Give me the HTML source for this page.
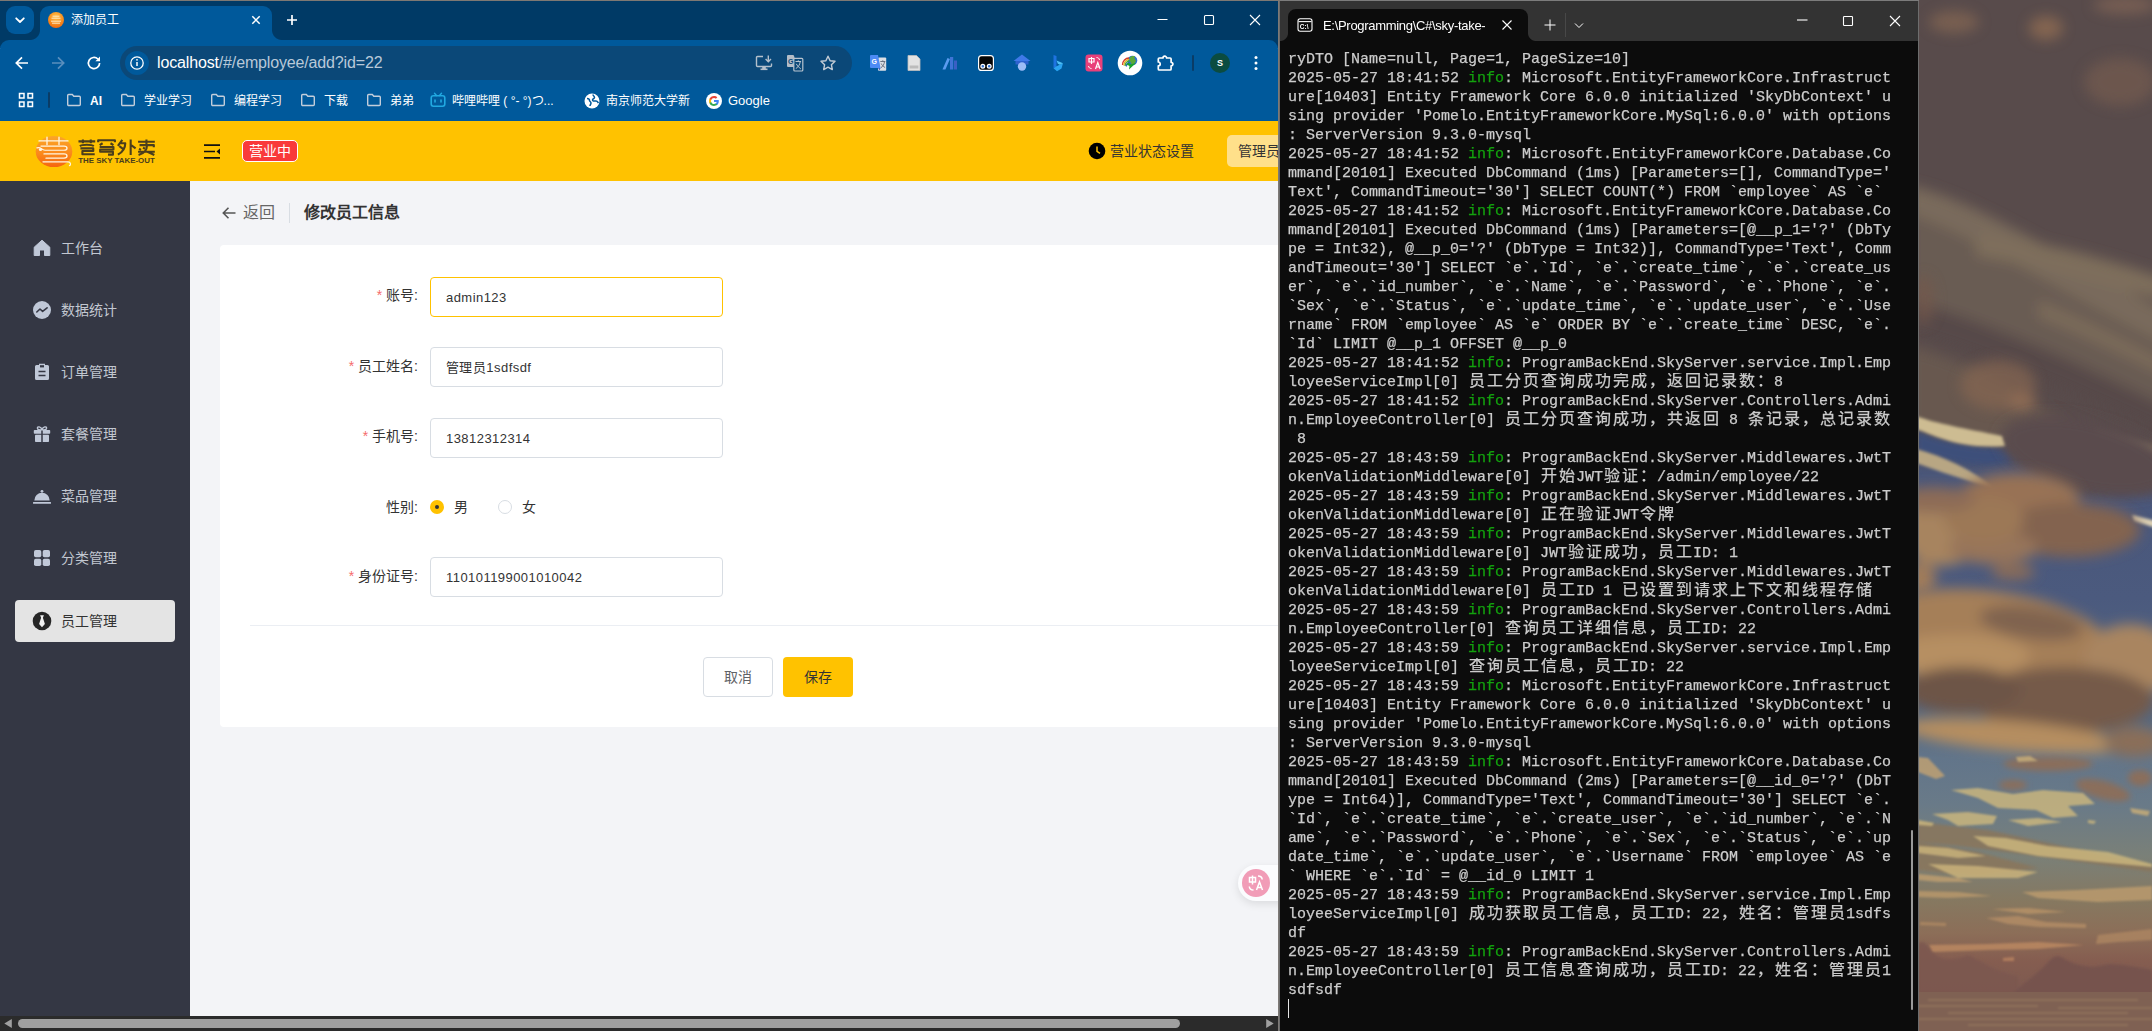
<!DOCTYPE html>
<html lang="zh-CN">
<head>
<meta charset="utf-8">
<title>添加员工</title>
<style>
*{box-sizing:border-box;margin:0;padding:0}
html,body{width:2152px;height:1031px;overflow:hidden;background:#4e4546}
body{position:relative;font-family:"Liberation Sans",sans-serif;font-size:14px;color:#333}
.abs{position:absolute}
svg{display:block}
.nss path{vector-effect:non-scaling-stroke}
/* ---------- wallpaper ---------- */
#wall{position:absolute;left:1918px;top:0;width:234px;height:1031px;overflow:hidden}
/* ---------- browser ---------- */
#br{position:absolute;left:0;top:0;width:1278px;height:1031px;overflow:hidden;background:#f3f4f7}
#brborder{position:absolute;left:1278px;top:0;width:2px;height:1031px;background:linear-gradient(90deg,#7d7976 0,#7d7976 50%,#6c6c6c 50%,#6c6c6c 100%)}
#tabstrip{position:absolute;left:0;top:0;width:1278px;height:48px;background:#003a66}
#topline{position:absolute;left:0;top:0;width:1280px;height:1px;background:#7e7873}
#tabsearch{position:absolute;left:6px;top:6px;width:28px;height:28px;border-radius:9px;background:#00599b}
#tab{position:absolute;left:40px;top:6px;width:232px;height:36px;border-radius:9px 9px 0 0;background:#00599b}
#tab:before,#tab:after{content:"";position:absolute;bottom:2px;width:10px;height:10px}
#tab:before{left:-10px;background:radial-gradient(circle at 0 0,transparent 9.5px,#00599b 10.5px)}
#tab:after{right:-10px;background:radial-gradient(circle at 100% 0,transparent 9.5px,#00599b 10.5px)}
#toolbar{position:absolute;left:0;top:40px;width:1278px;height:81px;background:#00599b;border-radius:9px 9px 0 0}
#url{position:absolute;left:120px;top:6px;width:732px;height:34px;border-radius:17px;background:#0b4878}
#url .ic{position:absolute;left:5px;top:5px;width:24px;height:24px;border-radius:12px;background:#00599b}
#urltext{position:absolute;left:37px;top:7px;font-size:16px;line-height:20px;color:#b9c9d9;white-space:nowrap;letter-spacing:-0.15px}
#urltext b{font-weight:normal;color:#fff}
.bm{position:absolute;top:53px;height:16px;line-height:16px;font-size:13px;color:#fff;white-space:nowrap}
/* ---------- page ---------- */
#page{position:absolute;left:0;top:121px;width:1278px;height:895px;background:#f3f4f7;overflow:hidden}
#hdr{position:absolute;left:0;top:0;width:1278px;height:60px;background:#ffc200}
#side{position:absolute;left:0;top:60px;width:190px;height:835px;background:#343744}
.mi{position:absolute;left:15px;width:160px;height:42px;border-radius:4px;color:#c2c7d1;font-size:14px;line-height:42px;white-space:nowrap}
.mi span{position:absolute;left:46px;top:0}
.mi svg{position:absolute;left:17px;top:11px}
.mi.on{background:#e4e4e4;color:#333}
#card{position:absolute;left:220px;top:124px;width:1100px;height:482px;background:#fff;border-radius:4px}
.lab{position:absolute;right:860px;height:20px;line-height:20px;font-size:14px;color:#333;white-space:nowrap;text-align:right}
.lab i{font-style:normal;color:#f56c6c;margin-right:4px;font-size:14px}
.inp{position:absolute;left:430px;width:293px;height:40px;border:1px solid #d8dde3;border-radius:4px;background:#fff;font-size:13px;line-height:39px;padding-left:15px;color:#333;white-space:nowrap;letter-spacing:.45px}
.btn{position:absolute;top:536px;width:70px;height:40px;border-radius:4px;font-size:14px;line-height:38px;text-align:center;white-space:nowrap}
/* ---------- scrollbar ---------- */
#hs{position:absolute;left:0;top:1016px;width:1278px;height:15px;background:#2b2b2b}
#hs .th{position:absolute;left:18px;top:3px;width:1162px;height:9px;border-radius:4.5px;background:#a0a0a0}
/* ---------- terminal ---------- */
#tm{position:absolute;left:1280px;top:0;width:638px;height:1031px;background:#0c0c0c;overflow:hidden;opacity:.999}
#tmr{position:absolute;left:1918px;top:0;width:1px;height:1031px;background:#6d6d6d}
#tmbar{position:absolute;left:0;top:0;width:638px;height:41px;background:#333}
#tmtop{position:absolute;left:1280px;top:0;width:639px;height:1px;background:#7c7c7c}
#tmtab{position:absolute;left:8px;top:9px;width:240px;height:32px;border-radius:8px 8px 0 0;background:#0c0c0c}
#tmtab:before,#tmtab:after{content:"";position:absolute;bottom:0;width:8px;height:8px}
#tmtab:before{left:-8px;background:radial-gradient(circle at 0 0,transparent 7.5px,#0c0c0c 8.5px)}
#tmtab:after{right:-8px;background:radial-gradient(circle at 100% 0,transparent 7.5px,#0c0c0c 8.5px)}
#tmtitle{position:absolute;left:43px;top:18px;font-size:13px;line-height:16px;color:#fff;white-space:nowrap;letter-spacing:-0.3px}
#tx{position:absolute;left:8px;top:50px;width:620px;font-family:"Liberation Mono",monospace;font-size:15px;color:#ccc;-webkit-text-stroke:.25px #ccc}
#tx div{height:19px;line-height:19px;white-space:pre;overflow:hidden}
#tx u{text-decoration:none;color:#13a10e;-webkit-text-stroke:.25px #13a10e}
#tx s{text-decoration:none;display:inline-block;width:18px;text-align:center;vertical-align:top;font-size:16px;line-height:19px;height:19px;overflow:hidden}
</style>
</head>
<body>
<div id="wall">
<svg width="234" height="1031" viewBox="0 0 234 1031">
 <defs>
  <linearGradient id="sky" x1="0" y1="0" x2="0" y2="1">
   <stop offset="0" stop-color="#574a49"/>
   <stop offset=".18" stop-color="#54494a"/>
   <stop offset=".27" stop-color="#5f524e"/>
   <stop offset=".36" stop-color="#5c4f4d"/>
   <stop offset=".42" stop-color="#5a4d4c"/>
   <stop offset=".46" stop-color="#49567a"/>
   <stop offset=".58" stop-color="#4b5a7e"/>
   <stop offset=".70" stop-color="#566880"/>
   <stop offset=".735" stop-color="#62758a"/>
   <stop offset=".78" stop-color="#697a88"/>
   <stop offset=".83" stop-color="#7a8078"/>
   <stop offset=".875" stop-color="#867860"/>
   <stop offset=".905" stop-color="#8c6e58"/>
   <stop offset=".932" stop-color="#855d50"/>
   <stop offset=".962" stop-color="#7d5a50"/>
   <stop offset=".964" stop-color="#806152"/>
   <stop offset="1" stop-color="#82675a"/>
  </linearGradient>
  <filter id="b7" x="-30%" y="-30%" width="160%" height="160%"><feGaussianBlur stdDeviation="6.5"/></filter>
  <filter id="b3" x="-30%" y="-30%" width="160%" height="160%"><feGaussianBlur stdDeviation="3"/></filter>
  <filter id="b2" x="-30%" y="-30%" width="160%" height="160%"><feGaussianBlur stdDeviation="1.5"/></filter>
  <filter id="b1" x="-30%" y="-30%" width="160%" height="160%"><feGaussianBlur stdDeviation="1.2"/></filter>
 </defs>
 <rect width="234" height="1031" fill="url(#sky)"/>
 <!-- dark upper mass with diagonal lower edge -->
 <g filter="url(#b7)">
  <path d="M-20 -20H260V488L150 494 88 446 -20 418z" fill="#584b4b"/>
 </g>
 <!-- lighter streak zone + streaks -->
 <g filter="url(#b7)">
  <path d="M-10 205C80 225 170 270 250 310V420C150 372 70 322-10 300z" fill="#695b52"/>
  <path d="M-10 345C50 360 120 395 160 440L60 450-10 425z" fill="#67584f"/>
  <path d="M-10 185C60 200 150 262 250 312V346C150 298 60 236-10 214z" fill="#796a5b"/>
  <path d="M58 232C120 241 190 258 250 280V302C190 284 120 266 58 256z" fill="#7e6e5c"/>
  <path d="M120 300C160 315 210 340 250 362V378C210 358 160 334 120 318z" fill="#7a6a5a"/>
  <path d="M-10 300C70 322 160 362 250 408V436C160 394 70 356-10 334z" fill="#56494a"/>
 </g>
 <!-- faint orange patches -->
 <g filter="url(#b7)" opacity=".7">
  <ellipse cx="36" cy="22" rx="25" ry="11" fill="#866752"/>
  <ellipse cx="128" cy="28" rx="17" ry="12" fill="#967053"/>
  <ellipse cx="207" cy="5" rx="32" ry="9" fill="#846656"/>
  <ellipse cx="202" cy="82" rx="36" ry="24" fill="#755b50"/>
  <ellipse cx="6" cy="300" rx="10" ry="25" fill="#74584c"/>
  <ellipse cx="80" cy="385" rx="38" ry="25" fill="#866651"/>
  <ellipse cx="104" cy="402" rx="13" ry="9" fill="#9f7357"/>
 </g>
 <!-- blue wedge, cream streaks -->
 <g filter="url(#b3)">
  <path d="M-2 430C20 440 50 447 88 448L96 462C70 471 30 463-2 452z" fill="#3c4f7a"/>
  <path d="M176 431L238 446V457L180 441z" fill="#8d7b66"/>
 </g>
 <g filter="url(#b7)">
  <ellipse cx="168" cy="456" rx="88" ry="36" fill="#5a4c4d" transform="rotate(14 168 456)"/>
 </g>
 <g filter="url(#b2)">
  <path d="M-2 416C20 424 45 428 84 436L87 446C60 448 40 444 25 439 15 436 5 431-2 429z" fill="#cdbc92"/>
  <path d="M-2 449C25 456 55 470 77 489 50 481 20 471-2 463z" fill="#b8a683"/>
  <path d="M214 515L238 521V528L216 521z" fill="#ddd2b5"/>
 </g>
 <!-- orange clouds band 1 -->
 <g filter="url(#b7)">
  <ellipse cx="100" cy="500" rx="62" ry="27" fill="#987254"/>
  <ellipse cx="152" cy="530" rx="70" ry="27" fill="#83644f"/>
  <ellipse cx="24" cy="530" rx="42" ry="36" fill="#a7845f"/>
  <ellipse cx="75" cy="548" rx="45" ry="16" fill="#97745a"/>
  <ellipse cx="66" cy="520" rx="40" ry="22" fill="#9c7857"/>
  <ellipse cx="16" cy="500" rx="42" ry="13" fill="#8d6c56"/>
  <ellipse cx="2" cy="578" rx="16" ry="16" fill="#a07c5a"/>
  <ellipse cx="95" cy="572" rx="22" ry="8" fill="#8a6c58"/>
 </g>
 <!-- big cloud -->
 <g filter="url(#b7)">
  <ellipse cx="75" cy="635" rx="118" ry="44" fill="#a57f59" transform="rotate(8 75 635)"/>
  <ellipse cx="212" cy="660" rx="46" ry="36" fill="#a98560"/>
  <ellipse cx="40" cy="656" rx="72" ry="22" fill="#b68f62"/>
  <ellipse cx="113" cy="623" rx="52" ry="16" fill="#80644f" transform="rotate(8 113 623)"/>
  <ellipse cx="146" cy="700" rx="90" ry="33" fill="#745a49"/>
  <ellipse cx="44" cy="690" rx="58" ry="23" fill="#6d5547"/>
  <ellipse cx="95" cy="736" rx="112" ry="15" fill="#b58e60" transform="rotate(5 95 736)"/>
  <ellipse cx="216" cy="742" rx="30" ry="15" fill="#8a6e58"/>
 </g>
 <!-- small brown clouds lower sky -->
 <g filter="url(#b3)" fill="#8a6e5c">
  <ellipse cx="130" cy="764" rx="45" ry="7"/>
  <ellipse cx="185" cy="790" rx="28" ry="9" transform="rotate(15 185 790)"/>
  <ellipse cx="222" cy="778" rx="12" ry="8"/>
  <ellipse cx="95" cy="785" rx="14" ry="5"/>
 </g>
 <!-- shaded streak bodies -->
 <g filter="url(#b2)" fill="#8a765c" opacity=".85">
  <path d="M0 822L70 830 130 843 234 866V872L120 856 40 846 0 842z"/>
  <path d="M0 842L60 852 120 868 60 876 0 870z"/>
 </g>
 <!-- lit streaks -->
 <g filter="url(#b1)" fill="#cdb87e" opacity=".82">
  <path d="M0 757L10 758 27 776 18 779 0 772z" fill="#c2a272"/>
  <path d="M33 790L60 788 95 794 125 790 165 793 177 804 150 806 160 816 135 818 118 810 80 808 60 798z"/>
  <path d="M98 757L112 756 120 761 100 762z" fill="#c9ae78"/>
  <path d="M14 814L50 812 79 816 75 824 40 826 30 820z"/>
  <path d="M90 820L120 818 144 822 110 826z"/>
  <path d="M170 820L178 821 176 824 170 823z"/>
  <path d="M212 808L232 811 230 816 214 813z" fill="#c9ae78"/>
  <path d="M0 820L16 823 14 826 0 825z"/>
  <path d="M55 836L88 838 130 846 190 852 234 864V867L180 862 120 856 70 846z"/>
  <path d="M0 846L30 848 68 856 40 858 0 853z" fill="#cbb47c"/>
  <path d="M10 864L60 866 120 872 100 878 40 878z" fill="#cdb57c"/>
  <path d="M0 874L40 878 55 882 20 882 0 880z" fill="#bf9f70"/>
  <path d="M104 892L160 890 234 886V900L180 902 120 898z" fill="#bd9c6e"/>
  <path d="M0 891L40 892 74 896 30 898 0 897z" fill="#ba996c"/>
  <path d="M74 909L110 908 148 912 110 914z" fill="#b89368"/>
  <path d="M68 918L100 916 128 922 168 924 168 928 120 927 90 924z" fill="#b48d66"/>
  <path d="M2 922L28 923 28 926 2 925z" fill="#b08a64"/>
  <path d="M180 935L234 929V940L200 942 178 944z" fill="#ad8662"/>
  <path d="M11 945L70 944 120 942 166 945 120 949 70 950 14 952z" fill="#bd8a62"/>
  <path d="M85 958L96 957 96 961 85 961z" fill="#b98360"/>
 </g>
 <!-- mountains -->
 <g filter="url(#b2)">
  <path d="M0 944C4 940 8 942 14 952 24 962 38 960 50 955 62 960 78 972 100 976L100 994H0z" fill="#7c5850" opacity=".9"/>
  <path d="M96 992C110 980 122 972 132 960 137 955 142 955 148 960 160 966 172 968 182 966 195 962 210 966 234 970V994H96z" fill="#76524d"/>
 </g>
 <rect x="0" y="992" width="234" height="39" fill="#7f6153"/>
 <g filter="url(#b1)" opacity=".5" stroke="#a98a68" stroke-width="1.400" fill="none"><path d="M10 1000h210M0 1006h120M140 1008h94M30 1013h180M0 1019h234M50 1025h160"/></g>
</svg>
</div>

<div id="br">
 <div id="tabstrip"></div>
 <div id="tabsearch"><svg width="28" height="28" viewBox="0 0 28 28"><path d="M10.2 12.3 L14 16 L17.8 12.3" fill="none" stroke="#fff" stroke-width="1.8" stroke-linecap="round" stroke-linejoin="round"/></svg></div>
 <div id="tab">
  <svg class="abs" style="left:8px;top:6px" width="16" height="16" viewBox="0 0 16 16"><defs><radialGradient id="fv" cx="50%" cy="30%" r="70%"><stop offset="0" stop-color="#ffc24a"/><stop offset="0.6" stop-color="#f8901f"/><stop offset="1" stop-color="#ee6a12"/></radialGradient></defs><circle cx="8" cy="8" r="8" fill="url(#fv)"/><path d="M3.5 6.2h9M4.5 4.2h7M3 9.2h10M4 11.2h8" stroke="#fff1d8" stroke-width="1" fill="none" opacity=".9"/></svg>
  <div class="abs" style="left:31px;top:6px;font-size:12px;line-height:16px;color:#fff;white-space:nowrap">添加员工</div>
  <svg class="abs" style="left:208px;top:6px" width="16" height="16" viewBox="0 0 16 16"><path d="M4.3 4.3l7.4 7.4M11.7 4.3l-7.4 7.4" stroke="#fff" stroke-width="1.5" fill="none"/></svg>
 </div>
 <svg class="abs" style="left:282px;top:10px" width="20" height="20" viewBox="0 0 20 20"><path d="M10 5v10M5 10h10" stroke="#fff" stroke-width="1.7" fill="none"/></svg>
 <!-- window controls -->
 <svg class="abs" style="left:1150px;top:8px" width="120" height="24" viewBox="0 0 120 24"><path d="M7.5 11.5h10" stroke="#fff" stroke-width="1" fill="none"/><rect x="54.5" y="7.5" width="9" height="9" rx="1" fill="none" stroke="#fff" stroke-width="1.1"/><path d="M100 7l10 10M110 7l-10 10" stroke="#fff" stroke-width="1.1" fill="none"/></svg>
 <div id="toolbar">
  <!-- nav icons -->
  <svg class="abs" style="left:12px;top:13px" width="20" height="20" viewBox="0 0 20 20"><path d="M16 10H4.8M10 4.3L4.3 10l5.7 5.7" fill="none" stroke="#fff" stroke-width="1.7" stroke-linejoin="miter"/></svg>
  <svg class="abs" style="left:48px;top:13px" width="20" height="20" viewBox="0 0 20 20"><path d="M4 10h11.2M10 4.3l5.7 5.7-5.7 5.7" fill="none" stroke="#5a8fbd" stroke-width="1.7"/></svg>
  <svg class="abs" style="left:84px;top:13px" width="20" height="20" viewBox="0 0 20 20"><path d="M15.6 10a5.6 5.6 0 1 1-1.7-4" fill="none" stroke="#fff" stroke-width="1.7"/><path d="M16 3.6v4.6h-4.6z" fill="#fff"/></svg>
  <div id="url">
   <div class="ic"><svg width="24" height="24" viewBox="0 0 24 24"><circle cx="12" cy="12" r="6.2" fill="none" stroke="#fff" stroke-width="1.3"/><path d="M12 11v4" stroke="#fff" stroke-width="1.5"/><circle cx="12" cy="8.8" r=".9" fill="#fff"/></svg></div>
   <div id="urltext"><b>localhost</b>/#/employee/add?id=22</div>
   <!-- install / translate / star -->
   <svg class="abs" style="left:634px;top:7px" width="20" height="20" viewBox="0 0 20 20"><path d="M9 3.5H3.5a1 1 0 0 0-1 1v8a1 1 0 0 0 1 1h13a1 1 0 0 0 1-1V10.5" fill="none" stroke="#b4c0cc" stroke-width="1.4"/><path d="M6.5 16.3h7" stroke="#b4c0cc" stroke-width="1.6"/><path d="M8.2 13.5h3.6v2.5H8.2z" fill="#b4c0cc"/><path d="M14.3 2.5v6M11.6 6l2.7 2.7L17 6" fill="none" stroke="#b4c0cc" stroke-width="1.4"/></svg>
   <svg class="abs" style="left:665px;top:7px" width="20" height="20" viewBox="0 0 20 20"><path d="M2 3a1 1 0 0 1 1-1h5.5l1.200 2.500H9.500V14H3a1 1 0 0 1-1-1z" fill="#b3bdc8"/><rect x="8.8" y="5.3" width="9" height="12.7" rx="1" fill="#0b4878" stroke="#b9c4cf" stroke-width="1.2"/><text x="3" y="11" font-family="Liberation Sans" font-size="7" font-weight="bold" fill="#0b4878">G</text><path d="M10.5 8.500h5.600M13.300 7.300v1.200M10.800 15.500c2.500-1.200 3.900-3.500 4.500-7M11.300 10.800c.8 1.700 2.300 3.500 4.600 5.200" stroke="#b9c4cf" stroke-width="1" fill="none"/></svg>
   <svg class="abs" style="left:698px;top:7px" width="20" height="20" viewBox="0 0 20 20"><path d="M10 3.200l2.100 4.500 4.900.6-3.600 3.400.9 4.900L10 14.200l-4.300 2.400.9-4.900L3 8.300l4.900-.6z" fill="none" stroke="#c3ccd6" stroke-width="1.4" stroke-linejoin="round"/></svg>
  </div>
  <!-- extension icons -->
  <svg class="abs" style="left:866px;top:11px" width="24" height="24" viewBox="0 0 24 24"><rect x="12" y="6.5" width="8.2" height="13.3" rx="1" fill="#dcdfe5"/><path d="M4 5a1 1 0 0 1 1-1h7l2.500 13H5a1 1 0 0 1-1-1z" fill="#4d8bf5"/><path d="M12 17h2.500l-1 2.600z" fill="#3c5fc0"/><text x="5.600" y="13" font-family="Liberation Sans" font-size="7" font-weight="bold" fill="#fff">G</text><path d="M14.300 10.500h5M16.800 9.300v1.200M14.800 16.800c2-1.200 3.300-3.200 3.700-6.200M15.200 12.500c.7 1.600 1.900 3 3.900 4" stroke="#6b7280" stroke-width="1" fill="none"/></svg>
  <svg class="abs" style="left:902px;top:11px" width="24" height="24" viewBox="0 0 24 24"><path d="M6 4.5h8.5l3.5 3.5v11.500H6z" fill="#e3e3e3" stroke="#bdbdbd" stroke-width=".8"/><rect x="7.6" y="14.5" width="8.8" height="3" fill="#bcbcbc"/></svg>
  <svg class="abs" style="left:938px;top:11px" width="24" height="24" viewBox="0 0 24 24"><path d="M4.5 18.5l5-11.500 2.400.9-4.500 10.600z" fill="#5b9bf0"/><rect x="12" y="6" width="3.200" height="12.500" fill="#3f74d6"/><rect x="16" y="9.500" width="3" height="9" fill="#3a5fc4"/></svg>
  <svg class="abs" style="left:974px;top:11px" width="24" height="24" viewBox="0 0 24 24"><rect x="4.600" y="4.600" width="14.800" height="14.800" rx="3" fill="#050505" stroke="#fff" stroke-width="1.200"/><circle cx="8.800" cy="15.300" r="1.900" fill="#2f6fd0" stroke="#fff" stroke-width="1.200"/><circle cx="15.200" cy="15.300" r="1.900" fill="#2f6fd0" stroke="#fff" stroke-width="1.200"/></svg>
  <svg class="abs" style="left:1010px;top:11px" width="24" height="24" viewBox="0 0 24 24"><path d="M12 3.500l8.500 6.500H3.500z" fill="#3f79e8"/><path d="M5.500 10h13v3.500h-13z" fill="#2f62cf"/><circle cx="12" cy="15.500" r="4.200" fill="#9dbcf7"/></svg>
  <svg class="abs" style="left:1046px;top:11px" width="24" height="24" viewBox="0 0 24 24"><path d="M7.500 4l3 1.100v10.200l-3 2z" fill="#1e73e0"/><path d="M7.500 17.300l3-2 6.500-3-1.500 5.200-4.500 2.800z" fill="#2aa3f0"/><path d="M10.500 9.500l6.500 2.800-3.200 1.500-2-1z" fill="#4fc0f5"/></svg>
  <svg class="abs" style="left:1082px;top:11px" width="24" height="24" viewBox="0 0 24 24"><rect x="3.500" y="3.500" width="17" height="17" rx="3" fill="#e9407a"/><path d="M7 7.500h5v3.500H7zM9.500 6v7" stroke="#fff" stroke-width="1.200" fill="none"/><path d="M13.500 18l2.300-6.500 2.300 6.500M14.300 16h3" stroke="#fff" stroke-width="1.200" fill="none"/><path d="M14.500 6.500c1.500 0 2.800.8 3 2.500M9.500 17.500c-1.500 0-2.800-.8-3-2.500" stroke="#fff" stroke-width="1" fill="none"/></svg>
  <svg class="abs" style="left:1117px;top:10px" width="26" height="26" viewBox="0 0 26 26"><circle cx="13" cy="13" r="12.300" fill="#fff"/><circle cx="15.500" cy="10.500" r="4.800" fill="#2e6fd0"/><path d="M12.500 8c1.500-2 4-2.500 5.500-1.500-1 1.500-.5 3 1 3.500 0 2-1.500 4-3.500 4.800-1.500-1-3-3.500-3-6.800z" fill="#5aa83a"/><path d="M5.500 15c0-4 3-7 6.500-7" stroke="#d23a2a" stroke-width="1.300" fill="none"/><path d="M6.800 15.500c0-3.500 2.500-6 5.500-6" stroke="#e8b422" stroke-width="1.300" fill="none"/><path d="M8.100 16c0-3 2-5 4.500-5" stroke="#3da33a" stroke-width="1.300" fill="none"/><path d="M9.400 16.500c0-2.300 1.600-4 3.600-4" stroke="#2b66c8" stroke-width="1.300" fill="none"/><path d="M11 12.500l3 1.700 5-1.200-7 6.500.5-3.500-3-1.500z" fill="#19a32a"/></svg>
  <svg class="abs" style="left:1154px;top:11px" width="24" height="24" viewBox="0 0 24 24"><path d="M5.300 7h3.700a1.800 1.800 0 1 1 3.600 0h3.500a1 1 0 0 1 1 1v3.300a1.800 1.800 0 1 1 0 3.600V18a1 1 0 0 1-1 1H5.300a1 1 0 0 1-1-1v-3.200a1.900 1.900 0 1 0 0-3.800V8a1 1 0 0 1 1-1z" fill="none" stroke="#fff" stroke-width="1.700" stroke-linejoin="round"/></svg>
  <div class="abs" style="left:1192px;top:15px;width:2px;height:16px;background:#0a3c66;border-radius:1px"></div>
  <div class="abs" style="left:1210px;top:13px;width:20px;height:20px;border-radius:10px;background:#0b4c40;color:#fff;font-size:9px;line-height:20px;text-align:center;font-weight:bold">S</div>
  <svg class="abs" style="left:1246px;top:13px" width="20" height="20" viewBox="0 0 20 20"><circle cx="10" cy="4.500" r="1.500" fill="#fff"/><circle cx="10" cy="10" r="1.500" fill="#fff"/><circle cx="10" cy="15.500" r="1.500" fill="#fff"/></svg>
  <svg class="abs" style="left:18px;top:52px" width="16" height="16" viewBox="0 0 16 16"><g fill="none" stroke="#fff" stroke-width="1.5"><rect x="1.500" y="1.500" width="4.500" height="4.500"/><rect x="10" y="1.500" width="4.500" height="4.500"/><rect x="1.500" y="10" width="4.500" height="4.500"/><rect x="10" y="10" width="4.500" height="4.500"/></g></svg>
  <div class="abs" style="left:48px;top:52px;width:2px;height:16px;background:#0a3c66;border-radius:1px"></div>
  <svg width="0" height="0" style="position:absolute"><defs><g id="fold"><path d="M1.700 3.500a1 1 0 0 1 1-1h3.600l1.500 1.700h5.500a1 1 0 0 1 1 1v7.300a1 1 0 0 1-1 1H2.700a1 1 0 0 1-1-1z" fill="none" stroke="#c3cedb" stroke-width="1.400"/></g></defs></svg>
  <svg class="abs" style="left:66px;top:52px" width="16" height="16"><use href="#fold"/></svg>
  <div class="bm" style="left:90px;font-weight:bold;font-size:12px">AI</div>
  <svg class="abs" style="left:120px;top:52px" width="16" height="16"><use href="#fold"/></svg>
  <div class="bm" style="left:144px;font-size:12px">学业学习</div>
  <svg class="abs" style="left:210px;top:52px" width="16" height="16"><use href="#fold"/></svg>
  <div class="bm" style="left:234px;font-size:12px">编程学习</div>
  <svg class="abs" style="left:300px;top:52px" width="16" height="16"><use href="#fold"/></svg>
  <div class="bm" style="left:324px;font-size:12px">下载</div>
  <svg class="abs" style="left:366px;top:52px" width="16" height="16"><use href="#fold"/></svg>
  <div class="bm" style="left:390px;font-size:12px">弟弟</div>
  <svg class="abs" style="left:430px;top:52px" width="16" height="16" viewBox="0 0 16 16"><path d="M4.500 1.200l2 2.300M11.500 1.200l-2 2.300" stroke="#21a9e1" stroke-width="1.400" fill="none" stroke-linecap="round"/><rect x="1.200" y="3.800" width="13.600" height="10.400" rx="2.200" fill="none" stroke="#21a9e1" stroke-width="1.600"/><path d="M5 8v2M11 8v2" stroke="#21a9e1" stroke-width="1.600" stroke-linecap="round"/></svg>
  <div class="bm" style="left:452px;font-size:12px;width:112px;overflow:hidden">哔哩哔哩 ( °- °)つ...</div>
  <svg class="abs" style="left:584px;top:53px" width="16" height="16" viewBox="0 0 16 16"><circle cx="8" cy="8" r="7.500" fill="#fff"/><path d="M3 5.500c2 0 2.500 1 2.500 2s1.500 1 1.500 2.500-1 1.500-1 3M9 1.500c0 1.500 1.500 1.500 1.500 3s-2 1-2 2.500 2 1 3.500 1 2 1.500 2.500 2" stroke="#00599b" stroke-width="1.500" fill="none"/></svg>
  <div class="bm" style="left:606px;font-size:12px">南京师范大学新</div>
  <svg class="abs" style="left:706px;top:53px" width="16" height="16" viewBox="0 0 16 16"><circle cx="8" cy="8" r="8" fill="#fff"/><path d="M12.800 8.100c0-.4 0-.7-.1-1H8v2h2.700c-.1.600-.5 1.200-1 1.500v1.300h1.600c1-.9 1.500-2.200 1.500-3.800z" fill="#4285f4"/><path d="M8 13c1.400 0 2.500-.5 3.300-1.200l-1.600-1.300c-.5.300-1 .5-1.700.5-1.300 0-2.400-.9-2.800-2.100H3.500v1.300C4.300 11.900 6 13 8 13z" fill="#34a853"/><path d="M5.200 8.900c-.1-.3-.2-.6-.2-.9s.1-.6.200-.9V5.800H3.500C3.200 6.500 3 7.200 3 8s.2 1.500.5 2.200z" fill="#fbbc05"/><path d="M8 5c.7 0 1.400.3 1.900.7l1.400-1.400C10.500 3.500 9.400 3 8 3 6 3 4.300 4.100 3.500 5.800l1.700 1.300C5.600 5.900 6.700 5 8 5z" fill="#ea4335"/></svg>
  <div class="bm" style="left:728px;font-size:13px">Google</div>

 </div>
 <div id="page">
  <div id="hdr">
   <!-- logo -->
   <svg class="abs" style="left:30px;top:10px" width="130" height="42" viewBox="0 0 130 42">
    <defs><linearGradient id="lg" x1="0" y1="0" x2="0" y2="1"><stop offset="0" stop-color="#fba628"/><stop offset=".55" stop-color="#fb8a1c"/><stop offset="1" stop-color="#f5640e"/></linearGradient></defs>
    <ellipse cx="24" cy="20.500" rx="18.300" ry="15.600" fill="url(#lg)"/>
    <g fill="none" stroke="#fff6e2" stroke-width="1.300" stroke-linecap="round" transform="translate(0,2.500) scale(1,.93)">
     <path d="M9 8h29M17 4v8M29 4v8"/>
     <path d="M11 13.500h23c4 0 4 4.500 0 4.500H15c-4 0-4-4.500-8-2.500"/>
     <path d="M14 22h20c4 0 4 4.500 0 4.500H16"/>
     <path d="M13 30.500h25c3 0 3 3.500 1.500 4"/>
    </g>
    <circle cx="10.500" cy="18.500" r="1.600" fill="#fff6e2"/>
    <!-- stylised 苍穹外卖 -->
    <g fill="none" stroke="#4b3e1c" stroke-width="2.100" stroke-linejoin="round" transform="translate(0.700,4.900) scale(0.985,0.735)" class="nss">
     <!-- 苍 -->
     <path d="M48.500 7.500h17M53 5v5M61 5v5M50 14c2-2.500 12-2.500 14 0M50.500 17h13v3.500h-11v4.500h12.500"/>
     <!-- 穹 -->
     <path d="M68.500 8.500v-2.500h17v2.500M73 10l-3 2.500M81 10l3 2.500M70 15h14v3.500H70.500v3h13v4h-5"/>
     <!-- 外 -->
     <path d="M93 5.500l-4.500 8M90.500 10h5.500c0 7-2.500 12-7.500 15.500M90 14l4 4M101.500 5v21M101.500 12l5 5"/>
     <!-- 卖 -->
     <path d="M109 8h17M117.500 5v6M110.500 12.500h14.500v3M110 17.500l2 1.500M114 16l2 1.500M109 21.500h17M118 13.500c0 6-2 10-8.500 12.500M118.500 21.500l7 4.500"/>
    </g>
    <text x="48.300" y="32.400" font-family="Liberation Sans" font-weight="bold" font-size="6.800" fill="#4b3e1c" textLength="76.500" lengthAdjust="spacingAndGlyphs">THE SKY TAKE-OUT</text>
   </svg>
   <!-- hamburger -->
   <svg class="abs" style="left:203px;top:22px" width="18" height="18" viewBox="0 0 18 18"><path d="M1 2.200h16M1 8.500h11M1 14.800h16" stroke="#111" stroke-width="1.700" fill="none"/><path d="M17 5.500v6l-3.500-3z" fill="#111"/></svg>
   <div class="abs" style="left:242px;top:19px;width:56px;height:22px;border:1px solid #fff;border-radius:5px;background:#f93a3a;color:#fff;font-size:14px;line-height:20px;text-align:center;white-space:nowrap">营业中</div>
   <svg class="abs" style="left:1088px;top:21px" width="18" height="18" viewBox="0 0 18 18"><circle cx="9" cy="9" r="8.300" fill="#000"/><path d="M9 4.500v4.800l3 2" stroke="#ffc200" stroke-width="1.500" fill="none"/></svg>
   <div class="abs" style="left:1110px;top:20px;font-size:14px;line-height:20px;color:#333;white-space:nowrap">营业状态设置</div>
   <div class="abs" style="left:1227px;top:14px;width:120px;height:32px;border-radius:5px;background:#ffe08a;color:#333;font-size:14px;line-height:32px;padding-left:11px;white-space:nowrap">管理员</div>
  </div>
  <div id="side">
   <div class="mi" style="top:46px"><svg width="20" height="20" viewBox="0 0 20 20"><path d="M10 2.200l7.800 7v8.300h-5.300v-5.500h-5v5.500H2.200v-8.300z" fill="#c0c8d8" stroke="#c0c8d8" stroke-width="1" stroke-linejoin="round"/></svg><span>工作台</span></div>
   <div class="mi" style="top:108px"><svg width="20" height="20" viewBox="0 0 20 20"><circle cx="10" cy="10" r="9" fill="#c0c8d8"/><path d="M4.800 12l3.200-3 2.600 2.400 4.500-3.600" fill="none" stroke="#343744" stroke-width="1.600" stroke-linecap="round" stroke-linejoin="round"/></svg><span>数据统计</span></div>
   <div class="mi" style="top:170px"><svg width="20" height="20" viewBox="0 0 20 20"><path d="M3 4.500a1.500 1.500 0 0 1 1.500-1.500H7V1.800h6V3h2.500a1.500 1.500 0 0 1 1.500 1.500v12a1.500 1.500 0 0 1-1.500 1.500h-11a1.500 1.500 0 0 1-1.500-1.500z" fill="#c0c8d8"/><path d="M6.500 9.500h7M6.500 13.500h7" stroke="#343744" stroke-width="1.600"/><rect x="8" y="3.200" width="4" height="2.200" fill="#343744"/></svg><span>订单管理</span></div>
   <div class="mi" style="top:232px"><svg width="20" height="20" viewBox="0 0 20 20"><rect x="1.800" y="6" width="16.400" height="3.800" rx=".8" fill="#c0c8d8"/><rect x="3" y="10.800" width="14" height="7.200" rx=".8" fill="#c0c8d8"/><path d="M10 6v12" stroke="#343744" stroke-width="1.500"/><path d="M10 5.800c-1-3.500-5-3.800-4.500-1.300.3 1.300 2.500 1.500 4.500 1.300zM10 5.800c1-3.500 5-3.800 4.500-1.300-.3 1.300-2.500 1.500-4.500 1.300z" fill="none" stroke="#c0c8d8" stroke-width="1.400"/></svg><span>套餐管理</span></div>
   <div class="mi" style="top:294px"><svg width="20" height="20" viewBox="0 0 20 20"><path d="M2.300 14.500a7.700 7.700 0 0 1 15.400 0z" fill="#c0c8d8"/><rect x="1" y="16" width="18" height="1.800" rx=".5" fill="#c0c8d8"/><circle cx="10" cy="5.300" r="1.400" fill="#c0c8d8"/></svg><span>菜品管理</span></div>
   <div class="mi" style="top:356px"><svg width="20" height="20" viewBox="0 0 20 20"><g fill="#c0c8d8"><rect x="2" y="2" width="7.300" height="7.300" rx="1.800"/><rect x="10.700" y="2" width="7.300" height="7.300" rx="1.800"/><rect x="2" y="10.700" width="7.300" height="7.300" rx="1.800"/><rect x="10.700" y="10.700" width="7.300" height="7.300" rx="1.800"/></g></svg><span>分类管理</span></div>
   <div class="mi on" style="top:419px"><svg width="20" height="20" viewBox="0 0 20 20"><circle cx="10" cy="10" r="9.3" fill="#262626"/><path d="M8.1 4.200h3.800l-1 2.500 2 6.300-2.900 3.200-2.900-3.200 2-6.300z" fill="#f0f0f0"/></svg><span>员工管理</span></div>

  </div>
  <!-- breadcrumb -->
  <svg class="abs" style="left:221px;top:84px" width="16" height="16" viewBox="0 0 16 16"><path d="M14.500 8H2.500M7.500 2.800L2.300 8l5.200 5.200" fill="none" stroke="#555" stroke-width="1.600"/></svg>
  <div class="abs" style="left:243px;top:82px;font-size:16px;line-height:20px;color:#666;white-space:nowrap">返回</div>
  <div class="abs" style="left:289px;top:82px;width:1px;height:20px;background:#d8dde3"></div>
  <div class="abs" style="left:304px;top:82px;font-size:16px;line-height:20px;color:#333;font-weight:bold;white-space:nowrap">修改员工信息</div>
  <div id="card"></div>
  <div class="lab" style="top:164px"><i>*</i>账号:</div>
  <div class="inp" style="top:156px;border-color:#ffc200">admin123</div>
  <div class="lab" style="top:235px"><i>*</i>员工姓名:</div>
  <div class="inp" style="top:226px">管理员1sdfsdf</div>
  <div class="lab" style="top:305px"><i>*</i>手机号:</div>
  <div class="inp" style="top:297px">13812312314</div>
  <div class="lab" style="top:376px">性别:</div>
  <div class="abs" style="left:430px;top:379px;width:14px;height:14px;border-radius:7px;background:#ffc200"></div>
  <div class="abs" style="left:435px;top:384px;width:4px;height:4px;border-radius:2px;background:#333"></div>
  <div class="abs" style="left:454px;top:376px;font-size:14px;line-height:20px;white-space:nowrap">男</div>
  <div class="abs" style="left:498px;top:379px;width:14px;height:14px;border-radius:7px;background:#fff;border:1px solid #d8dde3"></div>
  <div class="abs" style="left:522px;top:376px;font-size:14px;line-height:20px;white-space:nowrap">女</div>
  <div class="lab" style="top:445px"><i>*</i>身份证号:</div>
  <div class="inp" style="top:436px">110101199001010042</div>
  <div class="abs" style="left:250px;top:504px;width:1040px;height:1px;background:#ebeef3"></div>
  <div class="btn" style="left:703px;border:1px solid #d8dde3;background:#fff;color:#606266">取消</div>
  <div class="btn" style="left:783px;background:#ffc200;color:#333;line-height:40px">保存</div>
  <!-- floating translate -->
  <div class="abs" style="left:1238px;top:744px;width:60px;height:36px;border-radius:18px;background:#fbfcfe;box-shadow:0 3px 8px rgba(0,0,0,.1)"></div>
  <svg class="abs" style="left:1242px;top:748px" width="28" height="28" viewBox="0 0 28 28"><circle cx="14" cy="14" r="14" fill="#f19cb7"/><g fill="none" stroke="#fff" stroke-width="1.500"><path d="M7.500 8.500h6v4.500h-6zM10.500 6.500v9"/><path d="M14.500 21l3-8 3 8M15.500 18.500h4"/><path d="M16 7c2.500 0 4 1.300 4.200 3.500M11.500 21c-2.500 0-4-1.300-4.200-3.500"/></g></svg>

</div>
<div id="hs"><div class="th"></div>
 <svg class="abs" style="left:3px;top:2px" width="10" height="11" viewBox="0 0 10 11"><path d="M8.800 1v9L1.300 5.500z" fill="#a0a0a0"/></svg>
 <svg class="abs" style="left:1265px;top:2px" width="10" height="11" viewBox="0 0 10 11"><path d="M1.200 1v9l7.500-4.500z" fill="#a0a0a0"/></svg>
</div>

</div>
<div id="brborder"></div>
<div id="topline"></div>

<div id="tm">
 <div id="tmbar">
  <div id="tmtab">
   <svg class="abs" style="left:9px;top:8px" width="16" height="16" viewBox="0 0 16 16"><rect x="1" y="1.800" width="14" height="12.400" rx="2.200" fill="none" stroke="#fff" stroke-width="1.100"/><path d="M1.500 4.600h13" stroke="#fff" stroke-width="1.100"/><text x="2.800" y="11.800" font-family="Liberation Sans" font-weight="bold" font-size="6.500" fill="#fff">C:\</text></svg>
   <svg class="abs" style="left:213px;top:10px" width="12" height="12" viewBox="0 0 12 12"><path d="M1.500 1.500l9 9M10.500 1.500l-9 9" stroke="#fff" stroke-width="1.100" fill="none"/></svg>
  </div>
  <div id="tmtitle">E:\Programming\C#\sky-take-</div>
  <svg class="abs" style="left:263px;top:18px" width="14" height="14" viewBox="0 0 14 14"><path d="M7 1.500v11M1.500 7h11" stroke="#fff" stroke-width="1" fill="none"/></svg>
  <div class="abs" style="left:285px;top:13px;width:1px;height:24px;background:#484848"></div>
  <svg class="abs" style="left:293px;top:20px" width="12" height="12" viewBox="0 0 12 12"><path d="M2 3.500l4 4 4-4" stroke="#fff" stroke-width="1" fill="none"/></svg>
  <svg class="abs" style="left:510px;top:9px" width="120" height="24" viewBox="0 0 120 24"><path d="M7 11h10.500" stroke="#fff" stroke-width="1.100" fill="none"/><rect x="53.500" y="7.500" width="9" height="9" rx=".8" fill="none" stroke="#fff" stroke-width="1.100"/><path d="M100 7l10 10M110 7l-10 10" stroke="#fff" stroke-width="1.100" fill="none"/></svg>
 </div>
 <div id="tx">
<div>ryDTO [Name=null, Page=1, PageSize=10]</div>
<div>2025-05-27 18:41:52 <u>info</u>: Microsoft.EntityFrameworkCore.Infrastruct</div>
<div>ure[10403] Entity Framework Core 6.0.0 initialized 'SkyDbContext' u</div>
<div>sing provider 'Pomelo.EntityFrameworkCore.MySql:6.0.0' with options</div>
<div>: ServerVersion 9.3.0-mysql</div>
<div>2025-05-27 18:41:52 <u>info</u>: Microsoft.EntityFrameworkCore.Database.Co</div>
<div>mmand[20101] Executed DbCommand (1ms) [Parameters=[], CommandType='</div>
<div>Text', CommandTimeout='30'] SELECT COUNT(*) FROM `employee` AS `e`</div>
<div>2025-05-27 18:41:52 <u>info</u>: Microsoft.EntityFrameworkCore.Database.Co</div>
<div>mmand[20101] Executed DbCommand (1ms) [Parameters=[@__p_1='?' (DbTy</div>
<div>pe = Int32), @__p_0='?' (DbType = Int32)], CommandType='Text', Comm</div>
<div>andTimeout='30'] SELECT `e`.`Id`, `e`.`create_time`, `e`.`create_us</div>
<div>er`, `e`.`id_number`, `e`.`Name`, `e`.`Password`, `e`.`Phone`, `e`.</div>
<div>`Sex`, `e`.`Status`, `e`.`update_time`, `e`.`update_user`, `e`.`Use</div>
<div>rname` FROM `employee` AS `e` ORDER BY `e`.`create_time` DESC, `e`.</div>
<div>`Id` LIMIT @__p_1 OFFSET @__p_0</div>
<div>2025-05-27 18:41:52 <u>info</u>: ProgramBackEnd.SkyServer.service.Impl.Emp</div>
<div>loyeeServiceImpl[0] <s>员</s><s>工</s><s>分</s><s>页</s><s>查</s><s>询</s><s>成</s><s>功</s><s>完</s><s>成</s><s>，</s><s>返</s><s>回</s><s>记</s><s>录</s><s>数</s><s>：</s>8</div>
<div>2025-05-27 18:41:52 <u>info</u>: ProgramBackEnd.SkyServer.Controllers.Admi</div>
<div>n.EmployeeController[0] <s>员</s><s>工</s><s>分</s><s>页</s><s>查</s><s>询</s><s>成</s><s>功</s><s>，</s><s>共</s><s>返</s><s>回</s> 8 <s>条</s><s>记</s><s>录</s><s>，</s><s>总</s><s>记</s><s>录</s><s>数</s></div>
<div> 8</div>
<div>2025-05-27 18:43:59 <u>info</u>: ProgramBackEnd.SkyServer.Middlewares.JwtT</div>
<div>okenValidationMiddleware[0] <s>开</s><s>始</s>JWT<s>验</s><s>证</s><s>：</s>/admin/employee/22</div>
<div>2025-05-27 18:43:59 <u>info</u>: ProgramBackEnd.SkyServer.Middlewares.JwtT</div>
<div>okenValidationMiddleware[0] <s>正</s><s>在</s><s>验</s><s>证</s>JWT<s>令</s><s>牌</s></div>
<div>2025-05-27 18:43:59 <u>info</u>: ProgramBackEnd.SkyServer.Middlewares.JwtT</div>
<div>okenValidationMiddleware[0] JWT<s>验</s><s>证</s><s>成</s><s>功</s><s>，</s><s>员</s><s>工</s>ID: 1</div>
<div>2025-05-27 18:43:59 <u>info</u>: ProgramBackEnd.SkyServer.Middlewares.JwtT</div>
<div>okenValidationMiddleware[0] <s>员</s><s>工</s>ID 1 <s>已</s><s>设</s><s>置</s><s>到</s><s>请</s><s>求</s><s>上</s><s>下</s><s>文</s><s>和</s><s>线</s><s>程</s><s>存</s><s>储</s></div>
<div>2025-05-27 18:43:59 <u>info</u>: ProgramBackEnd.SkyServer.Controllers.Admi</div>
<div>n.EmployeeController[0] <s>查</s><s>询</s><s>员</s><s>工</s><s>详</s><s>细</s><s>信</s><s>息</s><s>，</s><s>员</s><s>工</s>ID: 22</div>
<div>2025-05-27 18:43:59 <u>info</u>: ProgramBackEnd.SkyServer.service.Impl.Emp</div>
<div>loyeeServiceImpl[0] <s>查</s><s>询</s><s>员</s><s>工</s><s>信</s><s>息</s><s>，</s><s>员</s><s>工</s>ID: 22</div>
<div>2025-05-27 18:43:59 <u>info</u>: Microsoft.EntityFrameworkCore.Infrastruct</div>
<div>ure[10403] Entity Framework Core 6.0.0 initialized 'SkyDbContext' u</div>
<div>sing provider 'Pomelo.EntityFrameworkCore.MySql:6.0.0' with options</div>
<div>: ServerVersion 9.3.0-mysql</div>
<div>2025-05-27 18:43:59 <u>info</u>: Microsoft.EntityFrameworkCore.Database.Co</div>
<div>mmand[20101] Executed DbCommand (2ms) [Parameters=[@__id_0='?' (DbT</div>
<div>ype = Int64)], CommandType='Text', CommandTimeout='30'] SELECT `e`.</div>
<div>`Id`, `e`.`create_time`, `e`.`create_user`, `e`.`id_number`, `e`.`N</div>
<div>ame`, `e`.`Password`, `e`.`Phone`, `e`.`Sex`, `e`.`Status`, `e`.`up</div>
<div>date_time`, `e`.`update_user`, `e`.`Username` FROM `employee` AS `e</div>
<div>` WHERE `e`.`Id` = @__id_0 LIMIT 1</div>
<div>2025-05-27 18:43:59 <u>info</u>: ProgramBackEnd.SkyServer.service.Impl.Emp</div>
<div>loyeeServiceImpl[0] <s>成</s><s>功</s><s>获</s><s>取</s><s>员</s><s>工</s><s>信</s><s>息</s><s>，</s><s>员</s><s>工</s>ID: 22<s>，</s><s>姓</s><s>名</s><s>：</s><s>管</s><s>理</s><s>员</s>1sdfs</div>
<div>df</div>
<div>2025-05-27 18:43:59 <u>info</u>: ProgramBackEnd.SkyServer.Controllers.Admi</div>
<div>n.EmployeeController[0] <s>员</s><s>工</s><s>信</s><s>息</s><s>查</s><s>询</s><s>成</s><s>功</s><s>，</s><s>员</s><s>工</s>ID: 22<s>，</s><s>姓</s><s>名</s><s>：</s><s>管</s><s>理</s><s>员</s>1</div>
<div>sdfsdf</div>
 </div>
 <div class="abs" style="left:8px;top:999px;width:1px;height:19px;background:#e6e6e6"></div>
 <div class="abs" style="left:631px;top:830px;width:2px;height:180px;background:#9a9a9a;border-radius:1px"></div>
</div>
<div id="tmr"></div>
<div id="tmtop"></div>

</body>
</html>
